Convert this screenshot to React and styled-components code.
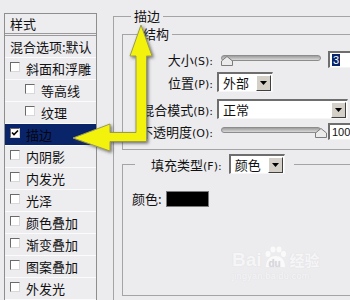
import React from "react";
import styled, { createGlobalStyle } from "styled-components";

const Global = createGlobalStyle`
  html, body {
    margin: 0;
    padding: 0;
    width: 350px;
    height: 300px;
    overflow: hidden;
    background: #ECEBEE;
  }
  body {
    font-family: "Noto Sans CJK SC", "DejaVu Sans", sans-serif;
    font-size: 13px;
    color: #111;
  }
`;

const Page = styled.div`
  position: relative;
  display: flex;
  align-items: flex-start;
  width: 350px;
  height: 300px;
  overflow: hidden;
  background: #ECEBEE;
`;

const StyleList = styled.div`
  box-sizing: border-box;
  flex-shrink: 0;
  width: 93px;
  height: 300px;
  margin: 13px 0 0 4px;
  border: 1px solid #8e8e8e;
  border-bottom: none;
  background: #EDECEF;
`;

const ListHeader = styled.div`
  height: 19px;
  line-height: 19px;
  padding-left: 5px;
  border-bottom: 3px double #9a9a9a;
`;

const ListItem = styled.div`
  display: flex;
  align-items: flex-start;
  height: 21px;
  padding-left: ${p => p.$indent}px;
  border-bottom: 1px solid #fbfbfc;
  background: ${p => (p.$active ? "#0A246A" : "transparent")};
  color: ${p => (p.$active ? "#05060e" : "#111")};
`;

const ItemText = styled.span`
  line-height: 21px;
  white-space: nowrap;
`;

const Check = styled.span`
  box-sizing: border-box;
  display: flex;
  align-items: center;
  justify-content: center;
  width: 10px;
  height: 10px;
  margin: 4px 6px 0 0;
  background: #fff;
  border-top: 1px solid #6a6a6a;
  border-left: 1px solid #6a6a6a;
  border-right: 1px solid #d8d8d8;
  border-bottom: 1px solid #d8d8d8;
`;

const RightCol = styled.div`
  flex-shrink: 0;
  width: 262px;
  margin: 9px 0 0 16px;
`;

const Group = styled.fieldset`
  margin: ${p => p.$mt || 0}px 0 0 0;
  padding: ${p => p.$pad};
  width: ${p => p.$w}px;
  min-height: ${p => p.$h || 0}px;
  box-sizing: border-box;
  border: 1px solid #a4a4a4;
  min-inline-size: 0;
`;

const Legend = styled.legend`
  margin-left: ${p => p.$ml}px;
  padding: 0 3px;
  line-height: 14px;
  font-size: 13px;
`;

const FillLegend = styled.legend`
  display: flex;
  align-items: center;
  gap: 7px;
  margin-left: 3px;
  padding: 0 9px 0 16px;
`;

const Row = styled.div`
  display: flex;
  align-items: center;
  height: ${p => p.$h}px;
  margin-top: ${p => p.$mt || 0}px;
`;

const Label = styled.span`
  width: 90px;
  padding-right: 4px;
  text-align: right;
  white-space: nowrap;
  font-size: 13px;
`;

const Latin = styled.span`
  font-family: "DejaVu Sans", sans-serif;
  font-size: 11px;
`;

const SliderWrap = styled.div`
  position: relative;
  width: 100px;
  height: 18px;
  margin-left: 4px;
`;

const Track = styled.div`
  position: absolute;
  left: 0;
  right: 0;
  top: 5px;
  height: 4px;
  border-radius: 3px;
  border: 1px solid #8c8c8c;
  background: linear-gradient(#9d9d9d, #d8d8d8);
`;

const Thumb = styled.svg`
  position: absolute;
  top: 6px;
  left: ${p => p.$x}px;
`;

const NumBox = styled.div`
  box-sizing: border-box;
  width: 40px;
  height: 17px;
  margin-left: 7px;
  padding-left: 2px;
  background: #fff;
  border-top: 2px solid #6e6e6e;
  border-left: 2px solid #6e6e6e;
  border-bottom: 1px solid #f4f4f4;
  font-family: "Liberation Sans", Arial, sans-serif;
  font-size: 11px;
  line-height: 14px;
`;

const Sel = styled.span`
  background: #0A246A;
  color: #fff;
  padding: 0 1px;
`;

const Select = styled.div`
  box-sizing: border-box;
  display: flex;
  align-items: center;
  width: ${p => p.$w}px;
  height: 20px;
  background: #fff;
  border-top: 2px solid #6e6e6e;
  border-left: 2px solid #6e6e6e;
  border-right: 1px solid #f6f6f6;
  border-bottom: 1px solid #f6f6f6;
`;

const SelectText = styled.span`
  flex: 1;
  padding-left: 4px;
  font-size: 13px;
  line-height: 16px;
`;

const DropBtn = styled.span`
  box-sizing: border-box;
  display: flex;
  align-items: center;
  justify-content: center;
  width: 15px;
  height: 16px;
  margin-right: 1px;
  background: #D4D0C8;
  border-top: 1px solid #fff;
  border-left: 1px solid #fff;
  border-right: 1px solid #404040;
  border-bottom: 1px solid #404040;
`;

const ColorRow = styled.div`
  display: flex;
  align-items: center;
  gap: 4px;
`;

const Swatch = styled.div`
  width: 43px;
  height: 16px;
  background: #000;
  border: 1px solid #7a7a7a;
  box-sizing: border-box;
`;

const ArrowLayer = styled.svg`
  position: absolute;
  left: 0;
  top: 0;
  pointer-events: none;
`;

const Watermark = styled.div`
  position: absolute;
  left: 232px;
  top: 246px;
  color: rgba(255, 255, 255, 0.75);
  text-shadow: 0 0 1px rgba(200, 200, 205, 0.5);
`;

const MarkTop = styled.div`
  display: flex;
  align-items: flex-end;
  font-family: "Liberation Sans", Arial, sans-serif;
  font-weight: bold;
  font-size: 19px;
  line-height: 20px;
`;

const MarkCn = styled.span`
  font-family: "Noto Sans CJK SC", sans-serif;
  font-size: 15px;
  margin-left: 2px;
`;

const MarkUrl = styled.div`
  font-family: "Liberation Sans", Arial, sans-serif;
  font-size: 9px;
  letter-spacing: 0.3px;
  margin-top: 1px;
`;

function Arrow() {
  return (
    <svg width="7" height="4" viewBox="0 0 7 4">
      <path d="M0 0h7L3.5 4z" fill="#000" />
    </svg>
  );
}

function Dropdown({ w, text }) {
  return (
    <Select $w={w}>
      <SelectText>{text}</SelectText>
      <DropBtn>
        <Arrow />
      </DropBtn>
    </Select>
  );
}

function Slider({ pos }) {
  return (
    <SliderWrap>
      <Track />
      <Thumb $x={pos} width="12" height="10" viewBox="0 0 12 10">
        <path d="M0.5 9.5V5L6 0.5L11.5 5V9.5Z" fill="#ebebeb" stroke="#7c7c7c" />
      </Thumb>
    </SliderWrap>
  );
}

const items = [
  { text: "斜面和浮雕", indent: 5 },
  { text: "等高线", indent: 20 },
  { text: "纹理", indent: 20 },
  { text: "描边", indent: 5, active: true },
  { text: "内阴影", indent: 5 },
  { text: "内发光", indent: 5 },
  { text: "光泽", indent: 5 },
  { text: "颜色叠加", indent: 5 },
  { text: "渐变叠加", indent: 5 },
  { text: "图案叠加", indent: 5 },
  { text: "外发光", indent: 5 },
];

export default function App() {
  return (
    <Page>
      <Global />
      <StyleList>
        <ListHeader>样式</ListHeader>
        <ListItem $indent={5}>
          <ItemText>混合选项:默认</ItemText>
        </ListItem>
        {items.map(it => (
          <ListItem key={it.text} $indent={it.indent} $active={it.active}>
            <Check>
              {it.active && (
                <svg width="8" height="8" viewBox="0 0 8 8">
                  <path d="M1 3.5l2 2L7 1.5" fill="none" stroke="#000" strokeWidth="1.6" />
                </svg>
              )}
            </Check>
            <ItemText>{it.text}</ItemText>
          </ListItem>
        ))}
      </StyleList>

      <RightCol>
        <Group $w={262} $h={300} $pad="4px 0 0 8px">
          <Legend $ml={9}>描边</Legend>
          <Group $w={250} $pad="9px 0 9px 0">
            <Legend $ml={17}>结构</Legend>
            <Row $h={18}>
              <Label>大小<Latin>(S):</Latin></Label>
              <Slider pos={0} />
              <NumBox><Sel>3</Sel></NumBox>
            </Row>
            <Row $h={20} $mt={4}>
              <Label>位置<Latin>(P):</Latin></Label>
              <Dropdown w={56} text="外部" />
            </Row>
            <Row $h={20} $mt={7}>
              <Label>混合模式<Latin>(B):</Latin></Label>
              <Dropdown w={131} text="正常" />
            </Row>
            <Row $h={18} $mt={3}>
              <Label>不透明度<Latin>(O):</Latin></Label>
              <Slider pos={94} />
              <NumBox>100</NumBox>
            </Row>
          </Group>
          <Group $w={250} $h={142} $mt={4} $pad="15px 0 0 9px">
            <FillLegend>
              <span>填充类型<Latin>(F):</Latin></span>
              <Dropdown w={56} text="颜色" />
            </FillLegend>
            <ColorRow>
              <span>颜色:</span>
              <Swatch />
            </ColorRow>
          </Group>
        </Group>
      </RightCol>

      <ArrowLayer width="350" height="300" viewBox="0 0 350 300">
        <defs>
          <filter id="sh" x="-20%" y="-20%" width="140%" height="140%">
            <feDropShadow dx="1.5" dy="1.5" stdDeviation="1.5" floodColor="#3a3a3a" floodOpacity="0.7" />
          </filter>
        </defs>
        <path
          d="M141 25 L152 56 L146.5 56 L146.5 141.5 L110 141.5 L110 151 L73 138 L110 124 L110 132.5 L136 132.5 L136 56 L130 56 Z"
          fill="#F3F20E"
          stroke="#9a9a55"
          strokeWidth="1"
          strokeLinejoin="round"
          filter="url(#sh)"
        />
      </ArrowLayer>

      <Watermark>
        <MarkTop>
          Bai
          <svg width="26" height="24" viewBox="0 0 26 24">
            <g fill="rgba(255,255,255,0.75)">
              <ellipse cx="6" cy="8" rx="2.5" ry="3" />
              <ellipse cx="11" cy="3.5" rx="2.5" ry="3" />
              <ellipse cx="17" cy="3.5" rx="2.5" ry="3" />
              <ellipse cx="21.5" cy="8" rx="2.5" ry="3" />
              <path d="M4 21 C4 13 9 10 13.5 10 C18 10 23 13 23 21 Z" />
            </g>
            <text x="6.5" y="21" fontSize="10" fontWeight="bold" fill="#d8d7dc" fontFamily="Liberation Sans, sans-serif">du</text>
          </svg>
          <MarkCn>经验</MarkCn>
        </MarkTop>
        <MarkUrl>jingyan.baidu.com</MarkUrl>
      </Watermark>
    </Page>
  );
}
